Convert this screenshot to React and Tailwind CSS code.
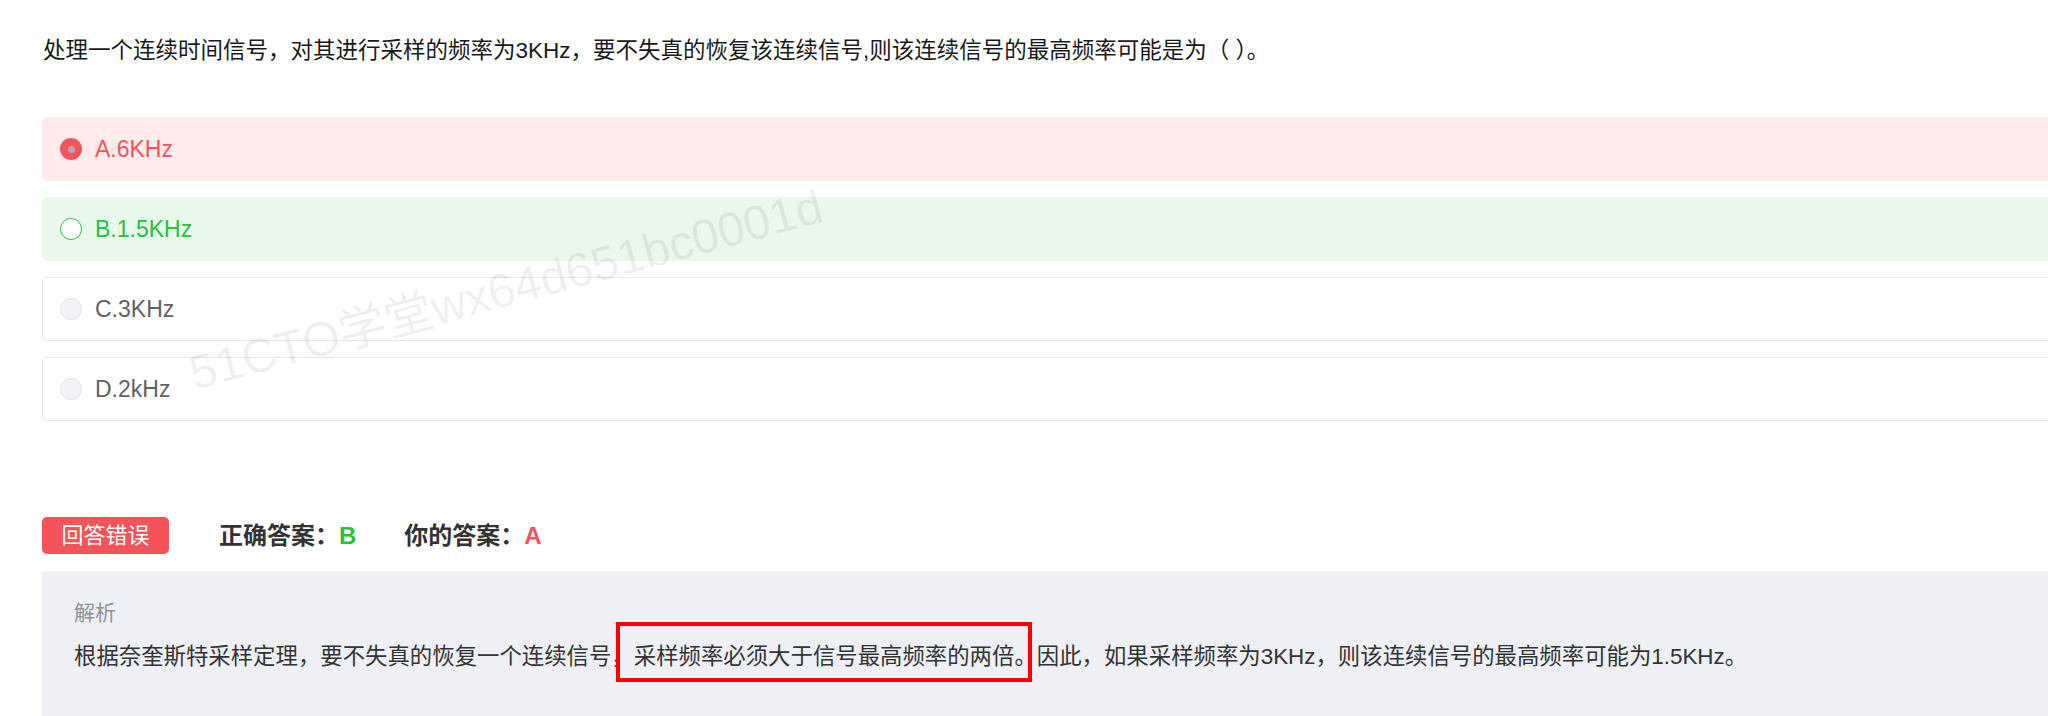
const options = [
  {
    key: "A",
    label: "A.6KHz",
    box: "bg-[#ffebeb] border border-[#ffebeb]",
    text: "text-[#f5545c]",
    radio: (
      <span className="flex h-[22px] w-[22px] shrink-0 items-center justify-center rounded-full bg-[#f5545c]">
        <span className="h-[7px] w-[7px] rounded-full bg-[#a9abb3]" />
      </span>
    ),
  },
  {
    key: "B",
    label: "B.1.5KHz",
    box: "bg-[#e8f8eb] border border-[#e8f8eb]",
    text: "text-[#27c23f]",
    radio: (
      <span className="h-[22px] w-[22px] shrink-0 rounded-full border-[1.5px] border-[#2bc443] bg-white" />
    ),
  },
  {
    key: "C",
    label: "C.3KHz",
    box: "bg-white border border-[#e4e7ee]",
    text: "text-[#606266]",
    radio: (
      <span className="h-[22px] w-[22px] shrink-0 rounded-full border border-[#dfe1e8] bg-[#f3f4f8]" />
    ),
  },
  {
    key: "D",
    label: "D.2kHz",
    box: "bg-white border border-[#e4e7ee]",
    text: "text-[#606266]",
    radio: (
      <span className="h-[22px] w-[22px] shrink-0 rounded-full border border-[#dfe1e8] bg-[#f3f4f8]" />
    ),
  },
];

export default function App() {
  return (
    <div className="relative h-[716px] w-full overflow-hidden bg-white font-['Liberation_Sans','Noto_Sans_CJK_SC',sans-serif]">
      {/* question stem */}
      <div className="pl-[43px] pt-[36px] text-[22.5px] leading-[30px] text-[#1a1a1a] whitespace-nowrap">
        处理一个连续时间信号，对其进行采样的频率为3KHz，要不失真的恢复该连续信号,则该连续信号的最高频率可能是为（ ）。
      </div>

      {/* choices */}
      <div className="mt-[51px] flex flex-col gap-[16px] pl-[42px]">
        {options.map((o) => (
          <div
            key={o.key}
            className={`-mr-[10px] flex h-[64px] items-center gap-[13px] rounded-[5px] pl-[17px] ${o.box}`}
          >
            {o.radio}
            <span className={`text-[23px] leading-none ${o.text}`}>{o.label}</span>
          </div>
        ))}
      </div>

      {/* result line */}
      <div className="mt-[96px] flex h-[37px] items-center pl-[42px]">
        <span className="flex h-[37px] w-[127px] items-center justify-center rounded-[5px] bg-[#f5535a] text-[22px] leading-none text-white">
          回答错误
        </span>
        <span className="ml-[50px] text-[24px] font-bold leading-none text-[#333333]">
          正确答案：<span className="text-[#27c23f]">B</span>
        </span>
        <span className="ml-[48px] text-[24px] font-bold leading-none text-[#333333]">
          你的答案：<span className="text-[#f5545c]">A</span>
        </span>
      </div>

      {/* explanation panel */}
      <div className="ml-[42px] mt-[17px] h-[200px] bg-[#eef0f5] pl-[32px] pt-[27px]">
        <div className="text-[21px] leading-[30px] text-[#909399]">解析</div>
        <div className="mt-[14px] whitespace-nowrap text-[22.4px] leading-[30px] text-[#333333]">
          根据奈奎斯特采样定理，要不失真的恢复一个连续信号，
          <span className="relative inline-block">
            采样频率必须大于信号最高频率的两倍。
            <span className="pointer-events-none absolute -left-[18px] right-[5px] -top-[20px] -bottom-[10px] border-4 border-[#ff0000]" />
          </span>
          因此，如果采样频率为3KHz，则该连续信号的最高频率可能为1.5KHz。
        </div>
      </div>

      {/* watermark */}
      <div className="pointer-events-none absolute left-[506px] top-[290px] z-10 -translate-x-1/2 -translate-y-1/2 -rotate-[15deg] whitespace-nowrap text-[48px] leading-none text-black/[0.07]">
        51CTO学堂wx64d651bc0001d
      </div>
    </div>
  );
}
